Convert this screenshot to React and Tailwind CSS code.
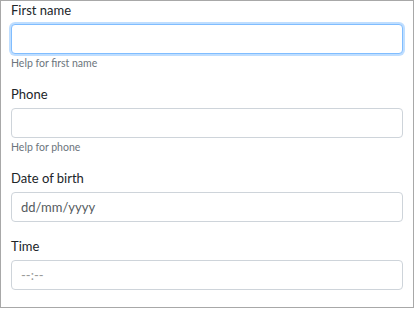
import React from "react";

const FONT = { fontFamily: 'Lato, "Open Sans", "Liberation Sans", sans-serif' };

function Field({ label, help, placeholder, focused, last, faint }) {
  return (
    <div className={last ? "" : "mb-[15px]"}>
      <label className="block h-[18px] text-[13px] leading-[18px] text-[#212529] mb-[5px]">
        {label}
      </label>
      <input
        type="text"
        placeholder={placeholder}
        readOnly
        className={
          "block w-full h-[30px] rounded-[4px] bg-white px-[9px] text-[13px] text-[#495057] outline-none " +
          (faint ? "placeholder:text-[#9a9a9a] " : "placeholder:text-[#555b60] ") +
          (focused
            ? "border border-[#80bdff] shadow-[0_0_0_2px_rgba(0,123,255,0.25)]"
            : "border border-[#ced4da]")
        }
      />
      {help ? (
        <div className="mt-[3px] h-[13px] text-[10.5px] leading-[13px] text-[#6c757d]">{help}</div>
      ) : null}
    </div>
  );
}

export default function App() {
  return (
    <div className="w-[416px] h-[309px] bg-white" style={FONT}>
      <div className="w-[414px] h-[308px] border border-[#a8a8a8] px-[10px]">
        <Field label="First name" help="Help for first name" focused />
        <Field label="Phone" help="Help for phone" />
        <Field label="Date of birth" placeholder="dd/mm/yyyy" />
        <Field label="Time" placeholder="--:--" faint last />
      </div>
    </div>
  );
}
